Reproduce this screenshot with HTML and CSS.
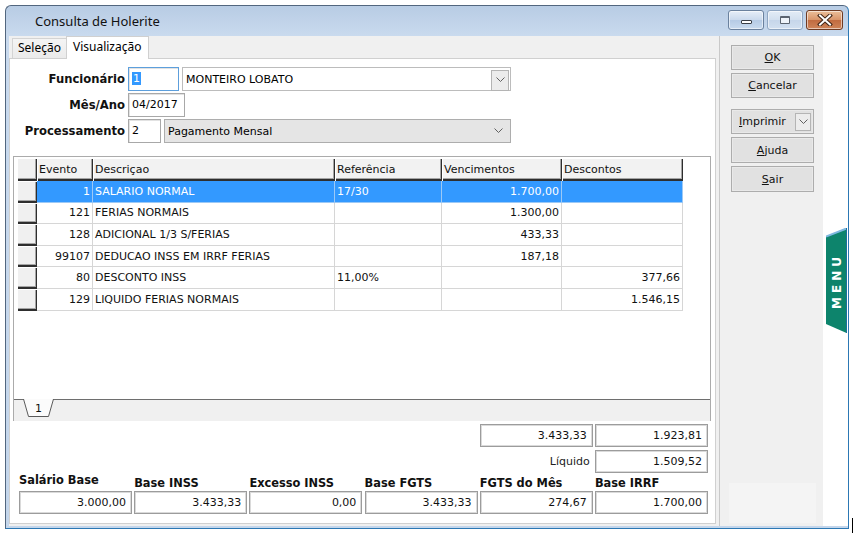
FILE: index.html
```html
<!DOCTYPE html>
<html lang="pt-BR">
<head>
<meta charset="utf-8">
<title>Consulta de Holerite</title>
<link rel="stylesheet" href="styles.css">
</head>
<body>
<div class="window">
  <div class="titlebar">
    <span class="title">Consulta de Holerite</span>
    <div class="caps">
      <div class="cap cap-min"><span class="ico-min"></span></div>
      <div class="cap cap-max"><span class="ico-max"></span></div>
      <div class="cap cap-close">
        <svg width="16" height="12" viewBox="0 0 16 12"><path d="M3 1.5 L13 10.5 M13 1.5 L3 10.5" stroke="#3f2416" stroke-width="4" stroke-linecap="square"/><path d="M3 1.5 L13 10.5 M13 1.5 L3 10.5" stroke="#fff" stroke-width="2" stroke-linecap="square"/></svg>
      </div>
    </div>
  </div>
  <div class="client">
    <div class="main">
      <div class="tabs">
        <div class="tab">Seleção</div>
        <div class="tab active">Visualização</div>
      </div>
      <div class="page">
        <div class="form">
          <div class="frow">
            <span class="flabel">Funcionário</span>
            <div class="inp inp-cod focus"><span class="sel">1</span></div>
            <div class="combo combo-func">
              <span class="combo-text">MONTEIRO LOBATO</span>
              <span class="dd-box"><svg width="9" height="6" viewBox="0 0 9 6"><path d="M0.5 0.5 L4.5 4.5 L8.5 0.5" fill="none" stroke="#606060" stroke-width="1"/></svg></span>
            </div>
          </div>
          <div class="frow">
            <span class="flabel">Mês/Ano</span>
            <div class="inp inp-mes">04/2017</div>
          </div>
          <div class="frow">
            <span class="flabel">Processamento</span>
            <div class="inp inp-proc">2</div>
            <div class="combo combo-proc">
              <span class="combo-text">Pagamento Mensal</span>
              <span class="dd-plain"><svg width="9" height="6" viewBox="0 0 9 6"><path d="M0.5 0.5 L4.5 4.5 L8.5 0.5" fill="none" stroke="#606060" stroke-width="1"/></svg></span>
            </div>
          </div>
        </div>

        <div class="gridwrap">
          <div class="gridbody">
            <table class="dg">
              <colgroup>
                <col class="w-ind"><col class="w-ev"><col class="w-desc"><col class="w-ref"><col class="w-ven"><col class="w-dsc">
              </colgroup>
              <thead>
                <tr><th class="ind"></th><th>Evento</th><th>Descriçao</th><th>Referência</th><th>Vencimentos</th><th>Descontos</th></tr>
              </thead>
              <tbody>
                <tr class="selected"><td class="ind"></td><td class="num">1</td><td>SALARIO NORMAL</td><td>17/30</td><td class="num">1.700,00</td><td class="num"></td></tr>
                <tr><td class="ind"></td><td class="num">121</td><td>FERIAS NORMAIS</td><td></td><td class="num">1.300,00</td><td class="num"></td></tr>
                <tr><td class="ind"></td><td class="num">128</td><td>ADICIONAL 1/3 S/FERIAS</td><td></td><td class="num">433,33</td><td class="num"></td></tr>
                <tr><td class="ind"></td><td class="num">99107</td><td>DEDUCAO INSS EM IRRF FERIAS</td><td></td><td class="num">187,18</td><td class="num"></td></tr>
                <tr><td class="ind"></td><td class="num">80</td><td>DESCONTO INSS</td><td>11,00%</td><td class="num"></td><td class="num">377,66</td></tr>
                <tr><td class="ind"></td><td class="num">129</td><td>LIQUIDO FERIAS NORMAIS</td><td></td><td class="num"></td><td class="num">1.546,15</td></tr>
              </tbody>
            </table>
          </div>
          <div class="strip">
            <svg class="pagetab" width="32" height="19" viewBox="0 0 32 19">
              <polygon points="0.5,0 5.5,17.5 25.5,17.5 30.5,0" fill="#fbfbfb"/>
              <polyline points="0.5,0 5.5,17.5 25.5,17.5 30.5,0" fill="none" stroke="#5a5a5a" stroke-width="1"/>
              <text x="15.5" y="13" text-anchor="middle" class="pagetab-text">1</text>
            </svg>
          </div>
        </div>

        <div class="totals">
          <div class="box r1 c5">3.433,33</div>
          <div class="box r1 c6">1.923,81</div>
          <div class="liq r2 c5">Líquido</div>
          <div class="box r2 c6">1.509,52</div>

          <div class="blabel lbl first">Salário Base</div>
          <div class="blabel lbl">Base INSS</div>
          <div class="blabel lbl">Excesso INSS</div>
          <div class="blabel lbl">Base FGTS</div>
          <div class="blabel lbl">FGTS do Mês</div>
          <div class="blabel lbl">Base IRRF</div>

          <div class="box bx">3.000,00</div>
          <div class="box bx">3.433,33</div>
          <div class="box bx">0,00</div>
          <div class="box bx">3.433,33</div>
          <div class="box bx">274,67</div>
          <div class="box bx">1.700,00</div>
        </div>
      </div>
    </div>

    <div class="side">
      <div class="side-inner">
        <div class="btn"><span><u>O</u>K</span></div>
        <div class="btn"><span><u>C</u>ancelar</span></div>
        <div class="btn btn-split">
          <span class="split-text"><u>I</u>mprimir</span>
          <span class="split-dd"><svg width="9" height="6" viewBox="0 0 9 6"><path d="M0.5 0.5 L4.5 4.5 L8.5 0.5" fill="none" stroke="#606060" stroke-width="1"/></svg></span>
        </div>
        <div class="btn btn-tall"><span><u>A</u>juda</span></div>
        <div class="btn btn-tall"><span><u>S</u>air</span></div>
        <div class="status"></div>
      </div>
    </div>

    <div class="menustrip">
      <svg class="menutab" width="21" height="106" viewBox="0 0 21 106">
        <polygon points="0,8.5 20.5,0 20.5,105 0,96" fill="#0d846c"/>
        <line x1="0" y1="8.5" x2="20.5" y2="0.5" stroke="#7fb8e0" stroke-width="2"/>
        <line x1="20.5" y1="0" x2="20.5" y2="105" stroke="#1c6f9a" stroke-width="1"/>
        <text class="menutext" x="0" y="0" transform="translate(14.5 53) rotate(-90)" text-anchor="middle">MENU</text>
      </svg>
    </div>
  </div>
</div>
<span class="cursor"></span>
</body>
</html>
```

FILE: styles.css
```css
* { box-sizing: border-box; }

html, body {
  margin: 0;
  padding: 0;
}

body {
  width: 854px;
  height: 535px;
  background: #ffffff;
  font-family: "DejaVu Sans", Verdana, sans-serif;
  font-size: 11px;
  color: #000;
  position: relative;
  overflow: hidden;
}

/* ---------- window frame ---------- */
.window {
  margin: 5px 0 0 5px;
  width: 844px;
  height: 524px;
  border: 1px solid #52667e;
  border-right-color: #2c78b4;
  border-bottom-color: #2c78b4;
  border-radius: 6px 6px 0 0;
  background: linear-gradient(#b8cce4, #c9daee 30px, #c4d6eb);
  display: flex;
  flex-direction: column;
  padding: 0 0 2px 3px;
}

.titlebar {
  height: 30px;
  display: flex;
  align-items: flex-start;
  flex: none;
}

.title {
  font-family: "Noto Sans", "Open Sans", sans-serif;
  font-size: 13px;
  color: #111;
  line-height: 30px;
  padding-left: 26px;
}

.caps {
  margin-left: auto;
  margin-right: 5px;
  margin-top: 4px;
  display: flex;
  gap: 3px;
}

.cap {
  height: 20px;
  border-radius: 3px;
  border: 1px solid #6a819e;
  display: flex;
  align-items: center;
  justify-content: center;
  box-shadow: inset 0 0 0 1px rgba(255,255,255,0.55);
}

.cap-min {
  width: 36px;
  background: linear-gradient(#e6eef8, #cbdaed 48%, #b6cbe5 52%, #c9dbef);
  align-items: flex-end;
  padding-bottom: 5px;
}

.ico-min {
  width: 11px;
  height: 4px;
  background: #fff;
  border: 1px solid #3a3f47;
  border-radius: 1px;
}

.cap-max {
  width: 36px;
  border-color: #8ea5c1;
  background: linear-gradient(#e3ecf6, #d3e0ef 48%, #c6d6ea 52%, #d2e0f0);
}

.ico-max {
  width: 10px;
  height: 8px;
  border: 1px solid #5b6470;
  border-top-width: 2px;
  background: #eef3f9;
  border-radius: 1px;
}

.cap-close {
  width: 37px;
  border-color: #6e3a22;
  background: linear-gradient(#ebbf9a, #d9956a 48%, #c16b40 52%, #cf8459);
}

/* ---------- client ---------- */
.client {
  flex: 1;
  display: flex;
  background: #f0f0f0;
  min-height: 0;
}

.main {
  width: 708px;
  display: flex;
  flex-direction: column;
  padding-bottom: 2px;
}

.tabs {
  height: 22px;
  display: flex;
  align-items: flex-end;
  padding-left: 3px;
  flex: none;
}

.tab {
  font-family: "Noto Sans", "Open Sans", sans-serif;
  font-size: 12px;
  height: 20px;
  line-height: 18px;
  padding: 0 5px;
  border: 1px solid #d4d4d4;
  border-bottom: none;
  background: linear-gradient(#f4f4f4, #ebebeb);
  color: #000;
}

.tab.active {
  height: 23px;
  margin-bottom: -1px;
  margin-left: -1px;
  background: #fff;
  line-height: 19px;
  padding: 0 6px;
  position: relative;
  z-index: 1;
  border-color: #d0d0d0;
}

.page {
  flex: 1;
  width: 707px;
  background: #fff;
  border: 1px solid #d0d0d0;
  display: flex;
  flex-direction: column;
}

/* ---------- form ---------- */
.form {
  margin-top: 8px;
  display: flex;
  flex-direction: column;
  gap: 2px;
}

.frow {
  display: flex;
  align-items: center;
  gap: 3px;
  height: 24px;
}

.flabel {
  width: 115px;
  text-align: right;
  font-weight: bold;
  font-size: 11.6px;
  color: #111;
}

.inp {
  height: 24px;
  border: 1px solid #a8a8a8;
  box-shadow: inset 1px 1px 0 #e2e2e2;
  background: #fff;
  line-height: 22px;
  padding: 0 3px;
  white-space: nowrap;
}

.inp.focus {
  border-color: #5d9fdc;
}

.sel {
  background: #3399ff;
  color: #fff;
  padding: 0 1px;
}

.inp-cod { width: 51px; }
.inp-mes { width: 57px; }
.inp-proc { width: 33px; }

.combo {
  height: 24px;
  border: 1px solid #bcbcbc;
  background: #fff;
  display: flex;
  align-items: center;
  padding-left: 3px;
}

.combo-func { width: 329px; }

.combo-proc {
  width: 347px;
  background: #e5e5e5;
  border-color: #adadad;
}

.combo-text {
  flex: 1;
  white-space: nowrap;
}

.dd-box {
  width: 18px;
  height: 21px;
  margin: 2px 1px 0 0;
  border: 1px solid #b4b4b4;
  background: #ececec;
  display: flex;
  align-items: center;
  justify-content: center;
}

.dd-plain {
  width: 18px;
  margin-right: 3px;
  display: flex;
  align-items: center;
  justify-content: center;
}

/* ---------- data grid ---------- */
.gridwrap {
  margin: 13px 0 0 3px;
  width: 698px;
  border: 1px solid #ababab;
  border-bottom: none;
  display: flex;
  flex-direction: column;
}

.gridbody {
  height: 242px;
  background: #fff;
  padding: 1px 0 0 3px;
}

.dg {
  table-layout: fixed;
  border-collapse: separate;
  border-spacing: 0;
  width: 666px;
}

.w-ind { width: 20px; }
.w-ev { width: 56px; }
.w-desc { width: 242px; }
.w-ref { width: 107px; }
.w-ven { width: 120px; }
.w-dsc { width: 121px; }

.dg th {
  height: 23px;
  font-weight: normal;
  text-align: left;
  padding: 1px 2px 1px 2px;
  background: #f2f2f2;
  box-shadow: inset 1px 1px 0 #fff, inset -1px -2px 0 #2e2e2e, inset -2px -3px 0 #a5a5a5;
  white-space: nowrap;
  overflow: hidden;
  color: #111;
}

.dg td {
  height: 21.6px;
  padding: 0 2px 0 2px;
  border-right: 1px solid #d6d6d6;
  border-bottom: 1px solid #d6d6d6;
  white-space: nowrap;
  overflow: hidden;
  color: #111;
}

.dg td.num { text-align: right; }

.dg td.ind,
.dg th.ind {
  background: #f0f0f0;
  border: none;
  box-shadow: inset 1px 1px 0 #fff, inset -1px -2px 0 #2e2e2e, inset -2px -3px 0 #a5a5a5;
}

.dg tr.selected td {
  background: #3399ff;
  color: #fff;
  border-right-color: #9cc9f6;
  border-bottom-color: #9cc9f6;
}

.dg tr.selected td.ind {
  background: #f0f0f0;
}

.strip {
  height: 22px;
  background: #f0f0f0;
  border-top: 1px solid #6e6e6e;
  padding-left: 9px;
}

.pagetab {
  display: block;
  margin-top: -1px;
}

.pagetab-text {
  font-family: "DejaVu Sans", sans-serif;
  font-size: 11px;
  fill: #111;
}

/* ---------- totals ---------- */
.totals {
  margin-top: 3px;
  padding-left: 9px;
  display: grid;
  grid-template-columns: repeat(6, 113px);
  grid-template-rows: 23px 3px 23px 18px 23px;
  column-gap: 2.2px;
}

.box {
  height: 23px;
  border: 1px solid #9c9c9c;
  box-shadow: inset 1px 1px 0 #dadada, inset -1px -1px 0 #dadada;
  background: #fff;
  text-align: right;
  padding-right: 5px;
  line-height: 21px;
  color: #111;
}

.r1 { grid-row: 1; }
.r2 { grid-row: 3; }
.c5 { grid-column: 5; }
.c6 { grid-column: 6; }
.lbl { grid-row: 4; }
.bx { grid-row: 5; }

.liq {
  text-align: right;
  padding-right: 3px;
  line-height: 23px;
  color: #222;
}

.blabel {
  align-self: end;
  font-weight: bold;
  font-size: 11.4px;
  line-height: 14px;
  padding-bottom: 1px;
  color: #111;
  white-space: nowrap;
}

.blabel.first {
  padding-bottom: 4px;
}

/* ---------- side buttons ---------- */
.side {
  width: 106px;
  padding-left: 2px;
  display: flex;
}

.side-inner {
  flex: 1;
  border-left: 1px solid #c9c9c9;
  padding: 9px 0 3px 11px;
  display: flex;
  flex-direction: column;
  gap: 3px;
}

.btn {
  width: 83px;
  height: 25px;
  border: 1px solid #adadad;
  box-shadow: inset 0 0 0 1px #e9e9e9;
  background: #e1e1e1;
  display: flex;
  align-items: center;
  justify-content: center;
  color: #111;
  flex: none;
}

.btn-tall { height: 26px; }

.btn-split {
  margin-top: 8px;
  justify-content: flex-start;
  padding-left: 7px;
}

.split-text { flex: 1; }

.split-dd {
  width: 16px;
  height: 18px;
  margin-right: 2px;
  border: 1px solid #b4b4b4;
  background: #ececec;
  display: flex;
  align-items: center;
  justify-content: center;
}

.status {
  margin-top: auto;
  margin-left: -2px;
  width: 87px;
  height: 40px;
  background: #f4f4f4;
}

/* ---------- menu strip ---------- */
.menustrip {
  width: 25px;
  background: #fff;
}

.menutab {
  display: block;
  margin: 192px 0 0 3px;
}

.menutext {
  font-family: "DejaVu Sans", sans-serif;
  font-weight: bold;
  font-size: 12px;
  letter-spacing: 4px;
  fill: #fff;
}

.cursor {
  position: absolute;
  left: 852px;
  top: 518px;
  width: 1px;
  height: 15px;
  background: #000;
}
```
